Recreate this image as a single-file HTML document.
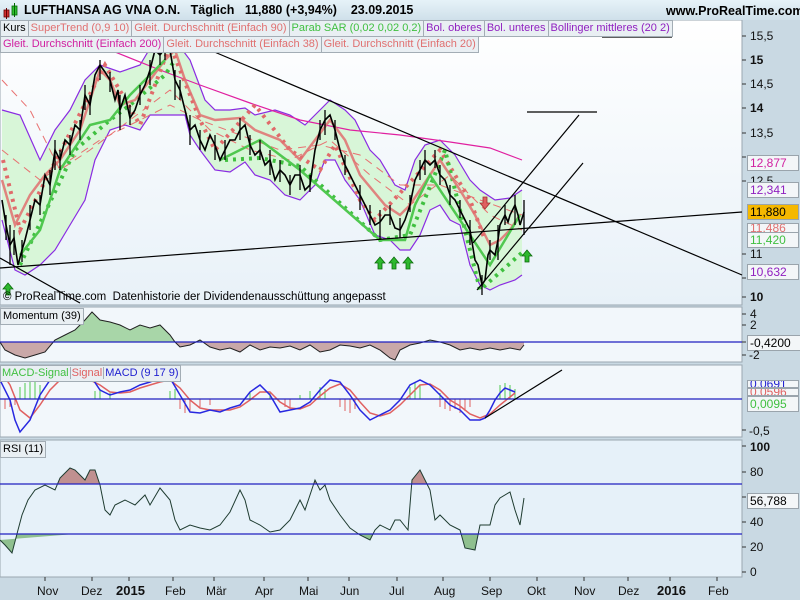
<!DOCTYPE html>
<html><head><meta charset="utf-8"><style>
*{margin:0;padding:0}
body{width:800px;height:600px;overflow:hidden;background:#c9d9e3;font-family:"Liberation Sans",sans-serif;position:relative}
.hdr{position:absolute;left:0;top:0;width:800px;height:20px;background:linear-gradient(#e6f2f8,#cfe0ea)}
.t{position:absolute;font-size:12px;white-space:nowrap}
.row{position:absolute;left:0;display:flex;height:16px}
.row span{display:block;height:15px;line-height:15px;font-size:11px;padding:0 2px;background:#e9eff3;border:1px solid #a3adb5;border-left:none;white-space:nowrap}
.row span:first-child{border-left:1px solid #a3adb5}
.lb{position:absolute;height:15px;line-height:15px;font-size:11px;padding:0 2px;background:#e9eff3;border:1px solid #a3adb5;white-space:nowrap}
.ax{position:absolute;font-size:12px;color:#111;white-space:nowrap}
.vb{position:absolute;left:747px;height:14px;line-height:14px;font-size:12px;padding:0 2px;background:#f3f6f8;border:1px solid #9aa4ac;width:46px}
</style></head><body>
<div class="hdr"></div>
<svg style="position:absolute;left:3px;top:3px" width="16" height="16"><rect x="1" y="7" width="5" height="7" fill="#d03030" stroke="#600" stroke-width=".8"/><line x1="3.5" y1="5" x2="3.5" y2="16" stroke="#600"/><rect x="9" y="3" width="5" height="9" fill="#30c030" stroke="#060" stroke-width=".8"/><line x1="11.5" y1="0" x2="11.5" y2="14" stroke="#060"/></svg>
<div class="t" style="left:24px;top:3px;font-weight:bold;font-size:12.5px">LUFTHANSA AG VNA O.N. &nbsp; Täglich &nbsp; 11,880 (+3,94%) &nbsp;&nbsp; 23.09.2015</div>
<div class="t" style="left:666px;top:4px;font-weight:bold;font-size:12.5px">www.ProRealTime.com</div>

<svg style="position:absolute;left:0;top:20px" width="800" height="580">
<defs>
<linearGradient id="bg" x1="0" y1="0" x2="0" y2="1"><stop offset="0" stop-color="#ffffff"/><stop offset="1" stop-color="#e8f1f8"/></linearGradient>
<clipPath id="mU"><rect x="0" y="287" width="742" height="35"/></clipPath>
<clipPath id="mD"><rect x="0" y="322" width="742" height="30"/></clipPath>
<clipPath id="rU"><rect x="0" y="440" width="742" height="44"/></clipPath>
<clipPath id="rD"><rect x="0" y="534" width="742" height="40"/></clipPath>
</defs>
<rect x="0" y="0" width="742" height="285" fill="url(#bg)" stroke="#9aa7b0"/>
<rect x="0" y="287" width="742" height="55" fill="#f2f7fb" stroke="#9aa7b0"/>
<rect x="0" y="345" width="742" height="72" fill="#f2f7fb" stroke="#9aa7b0"/>
<rect x="0" y="420" width="742" height="137" fill="#e6f1f9" stroke="#9aa7b0"/>
<g transform="translate(0,-20)">
<polygon fill="#d8f6d8" points="2,110 20,115 40,160 55,130 70,110 85,80 100,65 120,72 140,65 155,40 175,40 190,60 205,100 215,110 230,110 245,108 255,115 275,110 290,115 305,125 320,110 330,100 345,110 355,120 370,150 380,160 395,185 405,190 415,160 425,145 440,140 455,155 470,180 480,190 495,200 510,198 522,190 522,275 515,280 500,285 490,290 480,285 470,265 460,225 450,220 440,205 430,210 420,235 410,250 400,250 390,240 375,235 360,200 345,180 335,160 325,160 315,185 300,200 285,195 270,180 255,175 245,162 230,172 215,170 200,150 190,135 185,115 160,115 150,115 140,130 125,125 110,130 95,160 85,200 70,225 55,250 40,265 25,275 15,270 2,220"/>
<polyline fill="none" stroke="#8a2be2" stroke-width="1.2" points="2,110 20,115 40,160 55,130 70,110 85,80 100,65 120,72 140,65 155,40 175,40 190,60 205,100 215,110 230,110 245,108 255,115 275,110 290,115 305,125 320,110 330,100 345,110 355,120 370,150 380,160 395,185 405,190 415,160 425,145 440,140 455,155 470,180 480,190 495,200 510,198 522,190"/>
<polyline fill="none" stroke="#8a2be2" stroke-width="1.2" points="2,220 15,270 25,275 40,265 55,250 70,225 85,200 95,160 110,130 125,125 140,130 150,115 160,115 175,115 185,115 190,135 200,150 215,170 230,172 245,162 255,175 270,180 285,195 300,200 315,185 325,160 335,160 345,180 360,200 375,235 390,240 400,250 410,250 420,235 430,210 440,205 450,220 460,225 470,265 480,285 490,290 500,285 515,280 522,275"/>
<polyline fill="none" stroke="#e020a0" stroke-width="1.2" points="110,50 160,70 200,85 250,103 300,120 350,130 400,135 450,142 490,148 522,160"/>
<polyline fill="none" stroke="#e87070" stroke-width="1" stroke-dasharray="8 6" points="2,150 40,180 70,160 100,140 130,125 170,105 200,120 240,135 280,150 320,145 360,155 400,185 440,185 480,200 522,215"/>
<polyline fill="none" stroke="#e87070" stroke-width="1" stroke-dasharray="8 6" points="2,80 30,110 60,170 90,150 130,120 170,90 210,130 250,150 290,160 330,140 370,175 410,205 450,175 490,215 522,230"/>
<polyline fill="none" stroke="#e06a6a" stroke-width="4" stroke-dasharray="3 5" points="3,160 20,230 105,65 140,125 170,45 200,120 215,150 255,105 290,150 320,170 335,145 360,200 375,220 440,150 470,200 485,240"/>
<polyline fill="none" stroke="#40c040" stroke-width="4" stroke-dasharray="3 5" points="20,265 75,150 110,120 130,105 165,75 175,60"/>
<polyline fill="none" stroke="#40c040" stroke-width="4" stroke-dasharray="3 5" points="225,160 260,158 300,166 380,240 410,235 445,150 480,290 525,250"/>
<polyline fill="none" stroke="#e07070" stroke-width="2.5" opacity=".85" points="2,180 15,225 30,195 45,175 60,160 80,130 100,70 110,80 120,105 135,100 150,80 165,60 175,50 185,80 200,115 215,120 240,118 255,130 280,140 300,160 330,120 345,140 360,175 385,205 400,215 410,205 440,160 460,190 475,215 490,245 500,240 510,230 520,215"/>
<polyline fill="none" stroke="#50c850" stroke-width="2.5" points="20,255 40,230 60,170 90,125 110,120 130,95 150,75 165,60"/>
<polyline fill="none" stroke="#50c850" stroke-width="2.5" points="220,160 260,140 300,170 380,240 405,240 415,205 430,175 490,265 505,240 520,215"/>
<polyline fill="none" stroke="#000" stroke-width="1.6" points="2,200 6,225 10,245 14,238 18,265 22,250 25,240 30,220 35,200 40,205 45,175 50,185 55,150 60,160 65,140 70,145 75,125 80,130 85,95 90,105 95,75 100,65 105,72 110,80 115,100 118,90 120,110 125,95 130,118 135,110 140,95 145,85 150,70 155,50 160,55 165,48 170,50 175,80 180,90 185,110 190,130 195,125 200,140 205,150 210,135 215,145 220,160 225,150 230,140 235,140 240,130 245,125 250,145 255,155 260,150 265,165 270,160 275,180 280,170 285,175 290,185 295,175 300,175 305,190 310,185 315,150 320,130 325,120 330,115 335,130 340,150 345,165 350,175 355,185 360,195 365,205 370,215 375,225 380,222 385,215 390,215 395,228 400,230 405,220 410,205 415,180 420,170 425,160 430,165 435,160 440,175 445,180 450,195 455,200 460,210 465,220 470,230 475,260 478,265 482,285 485,280 488,255 490,250 495,255 498,240 500,225 505,215 508,222 510,215 515,205 518,215 520,225 524,212"/>
<g stroke="#000" stroke-width="1.3">
<path d="M6 215V240M10 225V265M14 230V255M22 240V262M30 205V230M40 195V215M50 170V195M55 140V170M60 150V170M70 135V155M80 120V140M85 85V110M90 95V115M100 60V80M110 72V92M120 95V130M130 105V125M140 85V105M150 60V85M160 42V65M165 45V60M175 70V100M180 80V100M190 115V145M200 130V150M215 135V160M225 140V160M240 118V140M250 135V155M260 140V160M270 150V175M280 160V182M290 175V195M300 165V190M310 175V192M320 120V140M325 110V135M335 120V140M345 155V175M360 185V210M370 205V225M380 210V240M390 205V225M400 218V238M410 195V212M420 160V180M425 150V175M435 150V168M440 165V185M450 185V205M460 200V218M470 220V245M482 275V295M490 240V260M498 225V260M505 205V225M515 195V225M524 200V235"/>
</g>
<g stroke="#000" stroke-width="1.2" fill="none">
<line x1="205" y1="48" x2="742" y2="275"/>
<line x1="0" y1="268" x2="742" y2="212"/>
<line x1="0" y1="258" x2="80" y2="303"/>
<line x1="473" y1="243" x2="579" y2="115"/>
<line x1="477" y1="290" x2="583" y2="163"/>
<line x1="527" y1="112" x2="597" y2="112"/>
<line x1="602" y1="37" x2="672" y2="37"/>
</g>
<g fill="#2eb82e" stroke="#0a6a0a" stroke-width=".8">
<path d="M8 283l-5 6h3v6h4v-6h3z"/>
<path d="M380 257l-5 6h3v6h4v-6h3z"/><path d="M394 257l-5 6h3v6h4v-6h3z"/><path d="M408 257l-5 6h3v6h4v-6h3z"/><path d="M527 250l-5 6h3v6h4v-6h3z"/>
</g>
<path d="M485 209l-5 -6h3v-6h4v6h3z" fill="#e06060" stroke="#a03030" stroke-width=".8"/>
</g>
<!-- momentum -->
<g>
<polygon clip-path="url(#mU)" fill="#a8d6a8" points="0,322 5,330 15,335 25,338 35,335 45,332 55,320 65,315 75,310 85,300 92,292 100,300 110,302 120,305 130,310 140,305 150,308 160,305 170,315 175,322 180,327 190,325 200,320 210,327 220,330 230,328 240,332 250,325 260,330 270,327 280,328 290,326 300,330 310,325 320,332 330,330 340,325 350,326 360,328 370,325 380,330 390,338 395,340 400,330 410,325 420,323 430,320 440,322 450,325 460,330 470,328 480,330 490,328 500,330 510,328 520,330 524,325 524,322"/>
<polygon clip-path="url(#mD)" fill="#c9a8a8" points="0,322 5,330 15,335 25,338 35,335 45,332 55,320 65,315 75,310 85,300 92,292 100,300 110,302 120,305 130,310 140,305 150,308 160,305 170,315 175,322 180,327 190,325 200,320 210,327 220,330 230,328 240,332 250,325 260,330 270,327 280,328 290,326 300,330 310,325 320,332 330,330 340,325 350,326 360,328 370,325 380,330 390,338 395,340 400,330 410,325 420,323 430,320 440,322 450,325 460,330 470,328 480,330 490,328 500,330 510,328 520,330 524,325 524,322"/>
<polyline fill="none" stroke="#202020" stroke-width="1" points="0,322 5,330 15,335 25,338 35,335 45,332 55,320 65,315 75,310 85,300 92,292 100,300 110,302 120,305 130,310 140,305 150,308 160,305 170,315 175,322 180,327 190,325 200,320 210,327 220,330 230,328 240,332 250,325 260,330 270,327 280,328 290,326 300,330 310,325 320,332 330,330 340,325 350,326 360,328 370,325 380,330 390,338 395,340 400,330 410,325 420,323 430,320 440,322 450,325 460,330 470,328 480,330 490,328 500,330 510,328 520,330 524,325"/>
<line x1="0" y1="322" x2="742" y2="322" stroke="#2020c0" stroke-width="1.2"/>
</g>
<!-- MACD -->
<g transform="translate(0,-20)">
<g stroke="#50c850" stroke-width="1"><path d="M20 399v-12M25 399v-16M30 399v-20M35 399v-18M40 399v-14M95 399v-8M100 399v-10M110 399v-6M170 399v-8M175 399v-10M250 399v-6M270 399v-6M300 399v-4M310 399v-8M320 399v-12M325 399v-10M410 399v-12M415 399v-16M420 399v-14M440 399v-6M500 399v-14M505 399v-16M510 399v-14M515 399v-10"/></g>
<g stroke="#e06060" stroke-width="1"><path d="M5 399v10M10 399v8M15 399v6M180 399v10M185 399v14M190 399v12M200 399v8M210 399v6M285 399v8M290 399v10M340 399v8M345 399v12M350 399v14M355 399v10M440 399v8M445 399v10M450 399v12M455 399v10M460 399v14M465 399v12M470 399v8"/></g>
<polyline fill="none" stroke="#e06060" stroke-width="1.5" points="0,370 10,385 20,410 30,418 40,405 50,390 60,380 70,377 80,377 90,380 100,385 110,392 120,393 130,392 140,388 150,385 160,382 170,380 180,388 190,400 200,408 210,410 220,410 230,410 240,407 250,400 260,392 270,392 280,402 290,408 300,409 310,405 320,396 330,388 340,384 350,390 360,402 370,413 380,416 390,413 400,405 410,395 420,385 430,384 440,390 450,400 460,406 470,414 480,418 490,414 500,405 510,397 515,393"/>
<polyline fill="none" stroke="#2828e0" stroke-width="1.5" points="0,380 10,400 15,420 20,432 30,420 40,395 50,380 60,375 70,375 80,378 90,375 100,390 110,395 120,392 130,390 140,385 150,382 160,378 170,378 180,395 190,412 200,413 210,410 220,412 230,408 240,405 250,392 260,385 270,395 280,412 290,410 300,408 310,402 320,390 330,380 340,382 350,395 360,410 370,420 380,415 390,410 400,400 410,385 420,380 430,385 440,395 450,405 460,410 470,420 480,420 485,418 490,410 495,400 500,393 505,388 510,390 515,392"/>
<line x1="0" y1="399" x2="742" y2="399" stroke="#2020c0" stroke-width="1.2"/>
<line x1="485" y1="418" x2="562" y2="370" stroke="#000" stroke-width="1.2"/>
</g>
<!-- RSI -->
<g transform="translate(0,-20)">
<polygon clip-path="url(#rD)" fill="#8fc08f" points="0,540 5,545 12,553 18,530 22,515 28,500 35,490 45,485 55,490 60,478 70,468 75,470 85,480 90,470 95,470 100,485 105,510 110,515 115,505 125,500 135,505 145,495 150,505 160,488 170,500 175,520 180,530 190,525 200,528 210,530 220,525 230,512 240,490 245,500 250,520 260,525 270,532 280,530 290,520 300,500 305,510 310,495 315,480 320,490 325,485 330,500 340,515 350,528 360,535 370,540 375,530 380,525 390,530 395,520 400,520 408,530 412,480 420,470 430,490 435,520 440,515 450,525 460,530 465,548 475,550 480,525 490,525 495,505 500,498 510,492 515,510 520,525 524,498"/>
<polygon clip-path="url(#rU)" fill="#c09090" points="0,540 5,545 12,553 18,530 22,515 28,500 35,490 45,485 55,490 60,478 70,468 75,470 85,480 90,470 95,470 100,485 105,510 110,515 115,505 125,500 135,505 145,495 150,505 160,488 170,500 175,520 180,530 190,525 200,528 210,530 220,525 230,512 240,490 245,500 250,520 260,525 270,532 280,530 290,520 300,500 305,510 310,495 315,480 320,490 325,485 330,500 340,515 350,528 360,535 370,540 375,530 380,525 390,530 395,520 400,520 408,530 412,480 420,470 430,490 435,520 440,515 450,525 460,530 465,548 475,550 480,525 490,525 495,505 500,498 510,492 515,510 520,525 524,498"/>
<polyline fill="none" stroke="#1e3b30" stroke-width="1" points="0,540 5,545 12,553 18,530 22,515 28,500 35,490 45,485 55,490 60,478 70,468 75,470 85,480 90,470 95,470 100,485 105,510 110,515 115,505 125,500 135,505 145,495 150,505 160,488 170,500 175,520 180,530 190,525 200,528 210,530 220,525 230,512 240,490 245,500 250,520 260,525 270,532 280,530 290,520 300,500 305,510 310,495 315,480 320,490 325,485 330,500 340,515 350,528 360,535 370,540 375,530 380,525 390,530 395,520 400,520 408,530 412,480 420,470 430,490 435,520 440,515 450,525 460,530 465,548 475,550 480,525 490,525 495,505 500,498 510,492 515,510 520,525 524,498"/>
</g>
<line x1="0" y1="464" x2="742" y2="464" stroke="#2020c0" stroke-width="1.2"/>
<line x1="0" y1="514" x2="742" y2="514" stroke="#2020c0" stroke-width="1.2"/>
<g stroke="#333" stroke-width="1">
<path d="M742 16h4M742 40h4M742 64h4M742 88h4M742 113h4M742 137h4M742 161h4M742 234h4M742 258h4M742 277h4M742 294h4M742 305h4M742 322h4M742 335h4M742 410h4M742 426h4M742 452h4M742 477h4M742 502h4M742 527h4M742 552h4"/>
<path d="M45 557v4M92 557v4M129 557v4M173 557v4M214 557v4M264 557v4M308 557v4M349 557v4M397 557v4M443 557v4M490 557v4M537 557v4M584 557v4M628 557v4M670 557v4M717 557v4"/>
</g>
</svg>

<div class="row" style="top:20px">
<span style="color:#000">Kurs</span>
<span style="color:#e07070">SuperTrend (0,9 10)</span>
<span style="color:#e07070">Gleit. Durchschnitt (Einfach 90)</span>
<span style="color:#40c040">Parab SAR (0,02 0,02 0,2)</span>
<span style="color:#9020c0">Bol. oberes</span>
<span style="color:#9020c0">Bol. unteres</span>
<span style="color:#9020c0">Bollinger mittleres (20 2)</span>
</div>
<div class="row" style="top:36px">
<span style="color:#d020a0">Gleit. Durchschnitt (Einfach 200)</span>
<span style="color:#e07070">Gleit. Durchschnitt (Einfach 38)</span>
<span style="color:#e07070">Gleit. Durchschnitt (Einfach 20)</span>
</div>
<div class="t" style="left:3px;top:291px;font-size:11.5px">© ProRealTime.com &nbsp;Datenhistorie der Dividendenausschüttung angepasst</div>
<div class="lb" style="left:0;top:308px">Momentum (39)</div>
<div class="lb" style="left:0;top:365px;padding:0"><span style="color:#40c040;padding:0 1px">MACD-Signal</span><span style="color:#e06060;border-left:1px solid #a3adb5;padding:0 1px">Signal</span><span style="color:#2020d0;border-left:1px solid #a3adb5;padding:0 1px">MACD (9 17 9)</span></div>
<div class="lb" style="left:0;top:441px">RSI (11)</div>

<div class="ax" style="left:750px;top:29px">15,5</div>
<div class="ax" style="left:750px;top:53px;font-weight:bold">15</div>
<div class="ax" style="left:750px;top:77px">14,5</div>
<div class="ax" style="left:750px;top:101px;font-weight:bold">14</div>
<div class="ax" style="left:750px;top:126px">13,5</div>
<div class="ax" style="left:750px;top:174px">12,5</div>
<div class="ax" style="left:750px;top:247px">11</div>
<div class="ax" style="left:750px;top:290px;font-weight:bold">10</div>
<div class="vb" style="top:155px;color:#d020a0">12,877</div>
<div class="vb" style="top:182px;color:#9020c0">12,341</div>
<div class="vb" style="top:204px;background:#f5b800;color:#000">11,880</div>
<div class="vb" style="top:223px;color:#e07070;height:8px;line-height:8px;overflow:hidden">11,486</div>
<div class="vb" style="top:232px;color:#40c040">11,420</div>
<div class="vb" style="top:264px;color:#9020c0">10,632</div>
<div class="ax" style="left:750px;top:307px">4</div>
<div class="ax" style="left:750px;top:318px">2</div>
<div class="vb" style="top:335px;color:#000;width:48px">-0,4200</div>
<div class="ax" style="left:749px;top:348px">-2</div>
<div class="vb" style="top:380px;color:#2020d0;height:6px;line-height:6px;overflow:hidden">0,0691</div>
<div class="vb" style="top:388px;color:#e06060;height:6px;line-height:6px;overflow:hidden">0,0596</div>
<div class="vb" style="top:396px;color:#40c040">0,0095</div>
<div class="ax" style="left:749px;top:424px">-0,5</div>
<div class="ax" style="left:750px;top:440px;font-weight:bold">100</div>
<div class="ax" style="left:750px;top:465px">80</div>
<div class="vb" style="top:493px;color:#000">56,788</div>
<div class="ax" style="left:750px;top:515px">40</div>
<div class="ax" style="left:750px;top:540px">20</div>
<div class="ax" style="left:750px;top:565px">0</div>
<div class="ax" style="left:37px;top:584px">Nov</div>
<div class="ax" style="left:81px;top:584px">Dez</div>
<div class="ax" style="left:116px;top:583px;font-weight:bold;font-size:13px">2015</div>
<div class="ax" style="left:165px;top:584px">Feb</div>
<div class="ax" style="left:206px;top:584px">Mär</div>
<div class="ax" style="left:255px;top:584px">Apr</div>
<div class="ax" style="left:299px;top:584px">Mai</div>
<div class="ax" style="left:340px;top:584px">Jun</div>
<div class="ax" style="left:389px;top:584px">Jul</div>
<div class="ax" style="left:434px;top:584px">Aug</div>
<div class="ax" style="left:481px;top:584px">Sep</div>
<div class="ax" style="left:527px;top:584px">Okt</div>
<div class="ax" style="left:574px;top:584px">Nov</div>
<div class="ax" style="left:618px;top:584px">Dez</div>
<div class="ax" style="left:657px;top:583px;font-weight:bold;font-size:13px">2016</div>
<div class="ax" style="left:708px;top:584px">Feb</div>
</body></html>
